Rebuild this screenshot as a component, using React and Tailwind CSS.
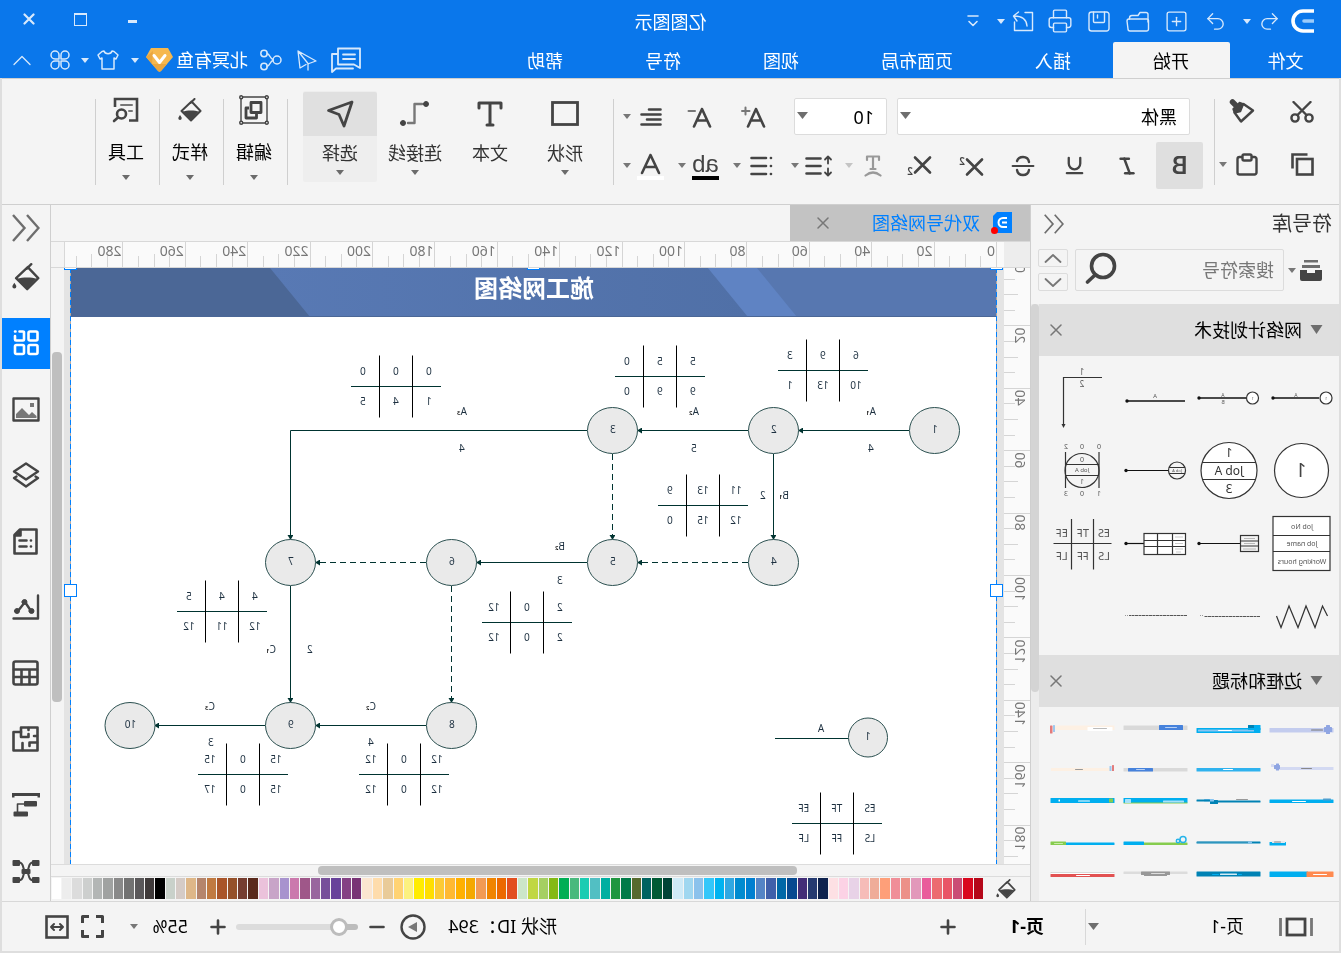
import React, { useState } from 'react';
import { Italic, Underline, Undo2, Redo2, SquarePlus, Printer } from 'lucide-react';

// Small stroked drawing, coordinates are pixels
function Icon({ w, h, sw = 2, fill = 'none', className = '', children }) {
  return (
    <svg
      width={w}
      height={h}
      viewBox={`0 0 ${w} ${h}`}
      fill={fill}
      stroke="currentColor"
      strokeWidth={sw}
      strokeLinecap="round"
      strokeLinejoin="round"
      className={`shrink-0 ${className}`}
      aria-hidden="true"
    >
      {children}
    </svg>
  );
}

function Caret({ className = '' }) {
  return (
    <svg width="8" height="5" viewBox="0 0 8 5" className={`shrink-0 ${className}`} aria-hidden="true">
      <path d="M0 0H8L4 5Z" fill="currentColor" />
    </svg>
  );
}

function BigCaret({ className = '' }) {
  return (
    <svg width="11" height="7" viewBox="0 0 11 7" className={`shrink-0 text-[#6e6e6e] ${className}`} aria-hidden="true">
      <path d="M0 0H11L5.500 7Z" fill="currentColor" />
    </svg>
  );
}

function IconButton({ label, className = '', children }) {
  return (
    <button type="button" aria-label={label} className={`flex shrink-0 items-center justify-center ${className}`}>
      {children}
    </button>
  );
}

function Bucket({ w = 24, h = 24 }) {
  return (
    <svg width={w} height={h} viewBox="0 0 24 24" fill="none" stroke="currentColor" strokeWidth="2" strokeLinejoin="round" strokeLinecap="round" className="shrink-0" aria-hidden="true">
      <path d="M7.500 1 11.500 5M10.500 3.500 20.500 13 11 22.500 1.500 13Z" />
      <path d="M3 13.500C7 12 15 12 19.500 13.500L11 22Z" fill="currentColor" stroke="none" />
      <path d="M22 17c1 1.500 1.700 2.500 1.700 3.200a1.700 1.700 0 0 1-3.400 0C20.300 19.500 21 18.500 22 17Z" fill="currentColor" stroke="none" />
    </svg>
  );
}

function CloseX() {
  return (
    <Icon w={12} h={12} sw={1.5}>
      <path d="M1 1 11 11M11 1 1 11" />
    </Icon>
  );
}

function DoubleChevron({ w, h }) {
  return (
    <svg width={w} height={h} viewBox="0 0 28 28" fill="none" stroke="#6e6e6e" strokeWidth="2.400" aria-hidden="true">
      <path d="M13 1 1.500 14 13 27M27 1 15.500 14 27 27" />
    </svg>
  );
}

/* ---------- title bar ---------- */

const MENU = ['插入', '页面布局', '视图', '符号', '帮助'];

function TitleBar() {
  return (
    <header className="shrink-0 bg-[#0a77eb] text-[#d8e9fc]">
      <div className="grid h-[42px] grid-cols-[1fr_auto_1fr] items-center">
        <div className="flex items-center pl-[18px]">
          <div className="flex w-10 justify-center text-white">
            <Icon w={23} h={24} sw={3.6}>
              <path d="M0 2H11A10 10 0 0 1 11 22H0" strokeLinecap="butt" />
              <path d="M0 12H10" stroke="#9ccbfa" />
            </Icon>
          </div>
          <IconButton label="撤销" className="w-[27px]"><Undo2 size={23} strokeWidth={1.4} /></IconButton>
          <IconButton label="撤销列表" className="w-[18px]"><Caret /></IconButton>
          <IconButton label="重做" className="ml-[3px] w-[39px]"><Redo2 size={23} strokeWidth={1.4} /></IconButton>
          <IconButton label="新建" className="w-[38px]"><SquarePlus size={25} strokeWidth={1.3} /></IconButton>
          <IconButton label="打开" className="w-[39px]">
            <Icon w={24} h={21} sw={1.4}>
              <path d="M2 11V3.500A2 2 0 0 1 4 1.500H10L12 4.500H18A2.500 2.500 0 0 1 20.500 7V8" />
              <path d="M3 8H21A2 2 0 0 1 23 10L22 18A2 2 0 0 1 20 20H3.500A2 2 0 0 1 1.500 18V9.500A1.500 1.500 0 0 1 3 8Z" />
            </Icon>
          </IconButton>
          <IconButton label="保存" className="w-[39px]">
            <Icon w={22} h={21} sw={1.4}>
              <rect x="1" y="1" width="20" height="19" rx="2.500" />
              <path d="M5.500 1V10.500A1 1 0 0 0 6.500 11.500H15.500A1 1 0 0 0 16.500 10.500V1M12.500 4V7" />
            </Icon>
          </IconButton>
          <IconButton label="打印" className="w-[39px]"><Printer size={26} strokeWidth={1.3} /></IconButton>
          <IconButton label="导出" className="w-[36px]">
            <Icon w={22} h={21} sw={1.4}>
              <path d="M9 1.500H1.500V19.500H19.500V11" />
              <path d="M7 15C7.500 8 12 5 20 5M15.500 1 20.500 5 17 10" />
            </Icon>
          </IconButton>
          <IconButton label="导出列表" className="w-2"><Caret /></IconButton>
          <IconButton label="更多" className="ml-[18px] w-3">
            <Icon w={12} h={12} sw={1.6}>
              <path d="M1 1H11M2 6.500 6 10.500 10 6.500" />
            </Icon>
          </IconButton>
        </div>
        <h1 className="pt-0.5 text-[18px] text-white">亿图图示</h1>
        <div className="flex items-center justify-end pr-[3px]">
          <IconButton label="最小化" className="w-[52px]"><span className="block h-[3px] w-[9px] bg-[#d8e9fc]" /></IconButton>
          <IconButton label="最大化" className="w-[52px]">
            <span className="mb-1 block h-[13px] w-[13px] border border-t-2 border-[#d8e9fc]" />
          </IconButton>
          <IconButton label="关闭" className="w-[52px]">
            <Icon w={12} h={12} sw={2.2} className="mb-1"><path d="M1.500 1.500 10.500 10.500M10.500 1.500 1.500 10.500" /></Icon>
          </IconButton>
        </div>
      </div>

      <div className="flex h-9 items-center">
        <nav className="flex h-full items-center text-[18px] text-white">
          <button type="button" className="h-full w-[111px] pt-0.5 whitespace-nowrap">文件</button>
          <button type="button" className="mr-px h-full w-[117px] rounded-t-xs bg-[#f4f4f4] pt-0.5 pl-px text-black">开始</button>
          {MENU.map((item) => (
            <button key={item} type="button" className="h-full px-[41px] pt-0.5 whitespace-nowrap">{item}</button>
          ))}
        </nav>
        <div className="ml-auto flex items-center pr-[13px]">
          <IconButton label="批注">
            <Icon w={30} h={26} sw={1.8}>
              <path d="M1 1.500H23V17.500H7L1 21Z" />
              <path d="M6 7.500H18M6 12H18M24 7H29V25L25 21.500H8" />
            </Icon>
          </IconButton>
          <IconButton label="发送" className="ml-[14px]">
            <Icon w={20} h={21} sw={1.3}>
              <path d="M19 1 1 11 8 13.500M19 1 17 18 11 14.500M19 1 9 13.500V20" />
            </Icon>
          </IconButton>
          <IconButton label="分享" className="ml-[15px]">
            <Icon w={22} h={22} sw={1.5}>
              <circle cx="18" cy="4.500" r="3.200" />
              <circle cx="18" cy="17.500" r="3.200" />
              <circle cx="5" cy="11" r="4" />
              <path d="M9 10.500C12 10 12 5 15 4.500M9 11.500C12 12 12 17 15 17.500" />
            </Icon>
          </IconButton>
          <a href="#account" className="ml-3 text-[18px] text-white">北冥有鱼</a>
          <svg width="27" height="24" viewBox="0 0 27 24" className="ml-[3px] shrink-0" aria-hidden="true">
            <path d="M5 0H22L27 9 15 23Q13.500 24.500 12 23L0 9Z" fill="#f6b84e" />
            <path d="M20 3 27 9 15 23Q13.500 24.500 12 23L6 16 21 16Z" fill="#e9a640" />
            <path d="M8 7.500 13.500 14.500 19 7.500" fill="none" stroke="#fff" strokeWidth="3" strokeLinecap="round" strokeLinejoin="round" />
          </svg>
          <Caret className="ml-[7px]" />
          <IconButton label="主题" className="ml-3">
            <Icon w={22} h={20} sw={1.5}>
              <path d="M7 1C8 4.500 14 4.500 15 1L17 1.500 21 5 19 9 17 8V19H5V8L3 9 1 5 5 1.500Z" />
            </Icon>
          </IconButton>
          <Caret className="ml-2" />
          <IconButton label="应用" className="ml-[11px]">
            <Icon w={20} h={20} sw={1.5}>
              <path d="M9 9H5A4 4 0 1 1 9 5ZM11 9V5A4 4 0 1 1 15 9ZM9 11V15A4 4 0 1 1 5 11ZM11 11H15A4 4 0 1 1 11 15Z" />
            </Icon>
          </IconButton>
          <IconButton label="收起功能区" className="ml-[19px]">
            <Icon w={18} h={11} sw={1.3}><path d="M1 9.500 9 1.500 17 9.500" /></Icon>
          </IconButton>
        </div>
      </div>
    </header>
  );
}

/* ---------- ribbon ---------- */

function Divider() {
  return <div className="mt-5 h-[86px] w-px shrink-0 bg-[#cfcfcf]" />;
}

function LetterA({ children }) {
  return (
    <Icon w={25} h={22} sw={2.6}>
      <path d="M2 20.500 10 3 18 20.500M5 14.500H15" />
      {children}
    </Icon>
  );
}

function BigButton({ label, caret = true, active, children }) {
  return (
    <button type="button" className={`mr-px h-[91px] w-[74px] shrink-0 rounded-xs ${active ? 'bg-[#eeeeee]' : ''}`}>
      <span className={`flex h-11 items-center justify-center rounded-t-xs ${active ? 'bg-[#e0e0e0]' : ''}`}>{children}</span>
      <span className="block h-7 text-[18px] leading-[34px] text-[#333]">{label}</span>
      <span className="flex h-[18px] items-center justify-center">{caret && <Caret className="text-[#6b6b6b]" />}</span>
    </button>
  );
}

function GroupButton({ label, children }) {
  return (
    <button type="button" className="mt-[13px] h-[91px] w-[63px] shrink-0 pl-[3px]">
      <span className="flex h-9 items-center justify-center">{children}</span>
      <span className="mt-2 block h-8 text-[18px] leading-8 text-black">{label}</span>
      <span className="flex h-[18px] items-center justify-center"><Caret className="text-[#6b6b6b]" /></span>
    </button>
  );
}

function Ribbon() {
  return (
    <div className="flex h-[127px] shrink-0 overflow-hidden border-y border-[#cfcfcf] bg-[#f4f4f4] text-[#444]">
      <div className="grid w-[124px] shrink-0 grid-cols-[60px_64px] grid-rows-[53px_53px] pt-[6px]">
        <IconButton label="剪切" className="pl-[14px]">
          <Icon w={24} h={22} sw={2.4}>
            <circle cx="5" cy="17" r="3.600" />
            <circle cx="19" cy="17" r="3.600" />
            <path d="M7.500 14 20.500 1M16.500 14 3.500 1" />
          </Icon>
        </IconButton>
        <IconButton label="格式刷" className="pl-[10px]">
          <Icon w={26} h={25} sw={2.4}>
            <path d="M22.500 3 19.500 6" strokeWidth="5.500" />
            <path d="M11.500 5 2 11.500 14 22.500 20.500 13.500Z" />
            <path d="M11.500 5 15.500 3.500 22 10 20.500 14 14.500 12.500Z" fill="currentColor" strokeWidth="1.500" />
          </Icon>
        </IconButton>
        <IconButton label="复制" className="pl-[13px]">
          <Icon w={23} h={23} sw={2.6}>
            <rect x="1.500" y="6" width="15.500" height="15.500" strokeLinejoin="miter" />
            <path d="M6.500 1.500H21.500V15.500" strokeLinecap="butt" strokeLinejoin="miter" />
          </Icon>
        </IconButton>
        <div className="flex items-center pl-[21px]">
          <IconButton label="粘贴">
            <Icon w={22} h={23} sw={2.4}>
              <rect x="1.500" y="4" width="19" height="17.500" rx="2" />
              <rect x="6.500" y="1.500" width="9" height="6" rx="1.500" fill="#f4f4f4" />
            </Icon>
          </IconButton>
          <Caret className="ml-[9px] text-[#777]" />
        </div>
      </div>
      <Divider />
      <div className="shrink-0 pt-[19px] pl-[11px]">
        <div className="flex h-[37px] items-center pl-[13px]">
          <div className="relative">
            <select aria-label="字体" defaultValue="黑体" className="h-[37px] w-[293px] appearance-none rounded-xs border border-[#dcdcdc] bg-white pt-0.5 pl-3 text-[18px] text-black">
              <option>黑体</option>
              <option>宋体</option>
            </select>
            <BigCaret className="pointer-events-none absolute top-[14px] right-[3px]" />
          </div>
          <div className="relative ml-[10px]">
            <select aria-label="字号" defaultValue="10" className="h-[37px] w-[93px] appearance-none rounded-xs border border-[#dcdcdc] bg-white pt-0.5 pl-3 text-[18px] text-black">
              <option>10</option>
              <option>12</option>
            </select>
            <BigCaret className="pointer-events-none absolute top-[14px] right-[3px]" />
          </div>
          <IconButton label="增大字号" className="ml-7"><LetterA><path d="M16.500 5H24M20.500 1.500V8.500" stroke="#777" strokeWidth="2" /></LetterA></IconButton>
          <IconButton label="减小字号" className="ml-[29px]"><LetterA><path d="M17 5H23.500" stroke="#777" strokeWidth="2" /></LetterA></IconButton>
          <IconButton label="对齐" className="ml-[25px]">
            <Icon w={22} h={18} sw={2.6}><path d="M1.500 1.500H13M1.500 6.500H20.500M1.500 11.500H15M1.500 16.500H20.500" /></Icon>
          </IconButton>
          <Caret className="ml-[9px] text-[#777]" />
        </div>
        <div className="mt-[7px] flex h-[47px] items-center">
          <button type="button" aria-label="加粗" className="mr-[3px] h-[47px] w-[47px] rounded-xs bg-[#dfdfdf] font-[Inter] text-[24px] leading-[47px] font-semibold">B</button>
          <IconButton label="倾斜" className="w-[52px]"><Italic size={22} strokeWidth={2.8} /></IconButton>
          <IconButton label="下划线" className="w-[52px]"><Underline size={23} strokeWidth={2.4} /></IconButton>
          <IconButton label="删除线" className="w-[52px]">
            <Icon w={24} h={22} sw={2.4}>
              <path d="M18 6C17 3 15 2 12 2S6.500 3.500 6 7M6 15C6.500 18 9 20 12 20S17.500 18.500 18 15" />
              <path d="M1.500 11H22.500" strokeWidth="1.800" />
            </Icon>
          </IconButton>
          <IconButton label="上标" className="w-[52px]">
            <Icon w={28} h={26} sw={2.6}>
              <path d="M3 6.500 18 21.500M18 6.500 3 21.500" />
              <text x="20" y="12" fontSize="10" fill="currentColor" stroke="none" fontWeight="600">2</text>
            </Icon>
          </IconButton>
          <IconButton label="下标" className="w-[52px]">
            <Icon w={28} h={26} sw={2.6}>
              <path d="M3 4.500 18 19.500M18 4.500 3 19.500" />
              <text x="20" y="22" fontSize="10" fill="currentColor" stroke="none" fontWeight="600">2</text>
            </Icon>
          </IconButton>
          <IconButton label="文字弧度" className="w-10 text-[#999]">
            <Icon w={18} h={22} sw={2.2}>
              <path d="M3 5V1.500H15V5M9 1.500V14M6.500 14H11.500M1.500 20.500Q9 14.500 16.500 20.500" />
            </Icon>
          </IconButton>
          <Caret className="text-[#c4c4c4]" />
          <IconButton label="行距" className="ml-3">
            <Icon w={28} h={22} sw={2.6}>
              <path d="M12.500 3.500H26.500M12.500 11H26.500M12.500 18.500H26.500" />
              <path d="M5 8.500V2M2 4.500 5 1.500 8 4.500M5 13.500V20M2 17.500 5 20.500 8 17.500" strokeWidth="1.800" />
            </Icon>
          </IconButton>
          <Caret className="ml-[6px] text-[#777]" />
          <IconButton label="项目符号" className="ml-[18px]">
            <Icon w={23} h={20} sw={2.6}>
              <path d="M7 2H21.500M7 10H21.500M7 18H21.500M2 2H2.100M2 10H2.100M2 18H2.100" />
            </Icon>
          </IconButton>
          <Caret className="ml-[9px] text-[#777]" />
          <button type="button" aria-label="突出显示" className="ml-[14px] h-7 w-[27px] border-b-4 border-black font-['Liberation_Sans'] text-[24px] leading-6">ab</button>
          <Caret className="ml-[6px] text-[#777]" />
          <IconButton label="字体颜色" className="ml-[14px]">
            <Icon w={27} h={28} sw={2.6}>
              <path d="M5 21 13.500 3 22 21M8.500 15H18.500" />
              <path d="M0 26H27" stroke="#fff" strokeWidth="4" strokeLinecap="butt" />
            </Icon>
          </IconButton>
          <Caret className="ml-[6px] text-[#777]" />
        </div>
      </div>
      <div className="w-[9px] shrink-0" />
      <Divider />
      <div className="flex shrink-0 pt-3 pl-[11px]">
        <BigButton label="形状">
          <Icon w={28} h={25} sw={2.8}><rect x="1.500" y="1.500" width="25" height="22" strokeLinejoin="miter" /></Icon>
        </BigButton>
        <BigButton label="文本" caret={false}>
          <Icon w={26} h={26} sw={3}><path d="M2 7V2H24V7M13 2V24M10 24H16" /></Icon>
        </BigButton>
        <BigButton label="连接线">
          <Icon w={31} h={27} sw={2.4}>
            <path d="M8 4H15.500V23H22" stroke="#777" />
            <circle cx="4" cy="4" r="2.500" fill="currentColor" strokeWidth="1" />
            <circle cx="27" cy="23" r="2.500" fill="currentColor" strokeWidth="1" />
          </Icon>
        </BigButton>
        <BigButton label="选择" active>
          <Icon w={28} h={28} sw={2.8}><path d="M2 2 25.500 10.500 15 14.500 10 26Z" /></Icon>
        </BigButton>
      </div>
      <div className="w-[14px] shrink-0" />
      <Divider />
      <GroupButton label="编辑">
        <Icon w={30} h={30} sw={1.4}>
          <path d="M4 2H26M4 28H26M2 4V26M28 4V26" />
          <circle cx="2.200" cy="2.200" r="1.500" />
          <circle cx="27.800" cy="2.200" r="1.500" />
          <circle cx="2.200" cy="27.800" r="1.500" />
          <circle cx="27.800" cy="27.800" r="1.500" />
          <rect x="8" y="7.500" width="10" height="10" strokeWidth="2.800" />
          <path d="M12.500 19V23H23V13H20" strokeWidth="2.800" strokeLinecap="butt" />
        </Icon>
      </GroupButton>
      <Divider />
      <GroupButton label="样式"><Bucket /></GroupButton>
      <Divider />
      <GroupButton label="工具">
        <Icon w={27} h={26} sw={2.6}>
          <path d="M24 10V2H2V23.500H10" strokeLinecap="butt" strokeLinejoin="miter" />
          <path d="M7 8H18M7 14H10" stroke="#777" strokeWidth="2" />
          <circle cx="17.500" cy="17" r="4.500" />
          <path d="M21 20.500 25 24" />
        </Icon>
      </GroupButton>
      <Divider />
    </div>
  );
}

/* ---------- symbol library ---------- */

function Tile({ children }) {
  return (
    <svg width="73" height="73" viewBox="0 0 73 73" fill="none" stroke="#333" strokeWidth="1.200" aria-hidden="true">
      {children}
    </svg>
  );
}

function T({ x, y, s = 8, c = '#555', children }) {
  return (
    <text x={x} y={y} fontSize={s} fill={c} stroke="none" textAnchor="middle" dominantBaseline="central">
      {children}
    </text>
  );
}

function Tip({ x, y }) {
  return <circle cx={x} cy={y} r="1.700" fill="#111" stroke="none" />;
}

function SymbolGrid() {
  return (
    <div className="grid grid-cols-[repeat(4,73px)] pt-[5px] pb-[2px]">
      <Tile>
        <path d="M20 37H66" stroke="#111" strokeWidth="1.500" /><Tip x={66} y={37} />
        <circle cx="13" cy="37" r="6" fill="#fff" />
        <T x={13} y={37} s={4}>1</T><T x={43} y={34} s={5}>A</T>
      </Tile>
      <Tile>
        <path d="M20 37H67" stroke="#111" strokeWidth="1.500" /><Tip x={67} y={37} />
        <circle cx="13.500" cy="37" r="6" fill="#fff" />
        <T x={13.5} y={37} s={4}>1</T><T x={43} y={34} s={5}>A</T><T x={43} y={41} s={5}>B</T>
      </Tile>
      <Tile>
        <path d="M8 40H66" stroke="#111" strokeWidth="1.300" /><Tip x={66} y={40} />
        <T x={38} y={35} s={6}>A</T>
      </Tile>
      <Tile>
        <path d="M18 16.500H56.500V64" /><path d="M54.500 63H58.500L56.500 67Z" fill="#333" stroke="none" />
        <T x={38} y={10} s={8}>1</T><T x={38} y={22} s={8}>2</T>
      </Tile>

      <Tile>
        <circle cx="37.500" cy="36.500" r="27" fill="#fff" /><T x={38} y={36} s={19} c="#444">1</T>
      </Tile>
      <Tile>
        <circle cx="37" cy="36.500" r="28" fill="#fff" /><path d="M10 28.500H64M10 45.500H64" />
        <T x={37} y={18} s={12} c="#333">1</T><T x={37} y={36} s={12} c="#333">Job A</T><T x={37} y={54} s={12} c="#333">3</T>
      </Tile>
      <Tile>
        <path d="M25 36.500H67" stroke="#111" /><Tip x={67} y={36.5} />
        <circle cx="16" cy="36.500" r="8.500" /><path d="M8 33.500H24M8 39.500H24" />
        <T x={16} y={36.5} s={4}>Job A</T>
      </Tile>
      <Tile>
        <circle cx="38" cy="36.500" r="17" /><path d="M21 18V54M54.500 18V54M21 30.500H54.500M21 41.500H54.500" />
        <T x={21} y={12} s={7}>0</T><T x={38} y={12} s={7}>0</T><T x={54} y={12} s={7}>2</T>
        <T x={38} y={25} s={7}>0</T><T x={38} y={36} s={6}>Job A</T><T x={38} y={47} s={7}>1</T>
        <T x={21} y={59} s={7}>1</T><T x={38} y={59} s={7}>0</T><T x={54} y={59} s={7}>3</T>
      </Tile>

      <Tile>
        <rect x="9" y="9.500" width="57" height="54" fill="#fff" /><path d="M9 28.500H66M9 44.500H66" />
        <T x={37} y={19} s={7}>Job No</T><T x={37} y={36} s={7}>Job name</T><T x={37} y={54} s={7}>Working hours</T>
      </Tile>
      <Tile>
        <path d="M26 36.500H67" stroke="#111" /><Tip x={67} y={36.5} />
        <rect x="7.500" y="28.500" width="18" height="16" /><path d="M7.500 34H25.500M7.500 39H25.500" />
        <path d="M11 31.500H22M11 36.500H22M10 42H23" stroke="#aaa" strokeWidth="0.800" />
      </Tile>
      <Tile>
        <path d="M49 36.500H67" stroke="#111" /><Tip x={67} y={36.5} />
        <rect x="7.500" y="26.500" width="41.500" height="21" fill="#fff" /><path d="M7.500 33.500H49M7.500 39.500H49M20.500 26.500V47.500M35.500 26.500V47.500" />
        <path d="M10 30H18M10 36.500H18M10 42H18M12 45H17" stroke="#bbb" strokeWidth="0.800" />
      </Tile>
      <Tile>
        <path d="M8.500 36.500H66.500M26.500 12V62.500M48.500 12V62.500" />
        <T x={16} y={25} s={11}>ES</T><T x={37} y={25} s={11}>TF</T><T x={58} y={25} s={11}>EF</T>
        <T x={16} y={48} s={11}>LS</T><T x={37} y={48} s={11}>FF</T><T x={58} y={48} s={11}>LF</T>
      </Tile>

      <Tile>
        <path d="M11.500 36 16.500 26 24 47.500 33 26 41 47.500 50 26 58 47.500 62.500 36" />
      </Tile>
      <Tile><path d="M6 36.500H62" strokeDasharray="3 0.500" stroke="#555" /><path d="M63 35.500H67" stroke="#999" strokeDasharray="1 1" /></Tile>
      <Tile><path d="M6 35.500H64" strokeDasharray="3 0.500" stroke="#555" /><path d="M65 35.500H68" stroke="#999" strokeDasharray="1 1" /></Tile>
    </div>
  );
}

// [x, y, width, height, color] inside a 73x37 tile
const BANNERS = [
  [[5.5, 18, 64, 4.5, '#c3ccee'], [16, 19.5, 12, 1, '#777'], [7, 17, 8, 5, '#8fa5e2'], [9, 15, 4, 9, '#8fa5e2']],
  [[5.5, 18, 64, 5, '#00aeef'], [12, 19.5, 56, 2, '#86c5f2'], [5.5, 15, 12.5, 5, '#00aeef'], [34, 20, 14, 1, '#fff'], [12, 15, 6, 3, '#0082b4']],
  [[5.5, 15.5, 64, 4.5, '#d9d9d9'], [10, 15, 24, 5, '#4682dc'], [16, 17, 12, 1, '#b7d0f5']],
  [[5.5, 15.5, 62, 4.5, '#fdf0e3'], [7.5, 17, 25, 4, '#fff'], [13, 18, 14, 1, '#bbb'], [65, 15, 2, 7, '#9cc8f0'], [67.5, 15.5, 2.5, 8, '#e37b7b']],
  [[5.5, 20, 58, 3, '#d3d9f2'], [27, 21, 11, 1, '#888'], [59, 18, 6, 4, '#8fa5e2'], [60, 16.5, 3, 7, '#8fa5e2'], [65, 17, 3, 3, '#d3d9f2']],
  [[5.5, 21, 64, 3.5, '#2fb2ee'], [33, 22, 10, 1, '#fff']],
  [[5.5, 21, 64, 3.5, '#d9d9d9'], [40, 21, 25, 3.5, '#4682dc'], [48, 22, 9, 1, '#b7d0f5']],
  [[8, 21, 61, 3, '#fdf0e3'], [37, 22, 8, 1, '#999'], [6, 18, 2, 6, '#e37b7b'], [8.5, 19, 2, 5, '#9cc8f0']],
  [[5.5, 15.5, 64, 3.5, '#00aeef'], [33, 17, 14, 1, '#fff'], [8, 14.5, 8, 2, '#4f9fd0']],
  [[5.5, 16.5, 46, 2, '#0082b4'], [48, 16, 8, 4, '#0082b4'], [52, 15, 10, 2.5, '#86c5f2'], [56, 15.5, 13.5, 2, '#0082b4'], [18, 15, 12, 1, '#999']],
  [[5.5, 14, 64, 5, '#00aeef'], [5.5, 18.5, 64, 1, '#86cc4e'], [9, 16.5, 21, 2, '#a8e0f8'], [62, 15, 6, 4, '#a8e0f8']],
  [[5.5, 14, 64, 5, '#00aeef'], [7, 14.5, 4, 4, '#86cc4e'], [30, 16.5, 12, 1, '#fff'], [60, 15.5, 1.5, 2, '#fff']],
  [[53, 21, 16.5, 3.5, '#00aeef'], [54, 20, 13, 2, '#e4e9ec'], [58, 20.5, 7, 1, '#888']],
  [[5.5, 20.5, 64, 2, '#0082b4'], [14, 20.5, 4, 2, '#86c5f2'], [18, 20.5, 51, 1, '#5aa7c8']],
  [[5.5, 21.5, 45, 2.5, '#86cc4e'], [49, 20.5, 20.5, 3.5, '#00aeef']],
  [[5.5, 21.5, 50, 2.5, '#00aeef'], [54, 20.5, 15.5, 3.5, '#86cc4e'], [57, 22, 9, 1, '#c8eca8']],
  [[31, 13.5, 38.5, 5.5, '#00aeef'], [5.5, 13.5, 27, 5.5, '#ff8a50'], [12, 16, 14, 1, '#fff']],
  [[5.5, 13.5, 64, 5, '#0082b4'], [29, 15.5, 17, 1.5, '#d4eef8'], [24, 16, 4, 1, '#00aeef'], [47, 16, 7, 1, '#00aeef']],
  [[5.5, 13.5, 64, 2.5, '#dcdcdc'], [23, 13.5, 29, 3.5, '#989898'], [28, 15, 14, 1, '#ddd'], [26, 16.5, 23, 1.5, '#989898']],
  [[5.5, 16, 64, 3, '#e25151'], [5.5, 14, 64, 1, '#ccc'], [6, 14.8, 63, 1.2, '#fff'], [30, 17, 14, 1, '#fff']],
];

function BannerGrid() {
  return (
    <div className="grid grid-cols-[repeat(4,73px)] pt-[3px]">
      {BANNERS.map((parts, i) => (
        <svg key={i} width="73" height="37" viewBox="0 0 73 37" aria-hidden="true">
          {parts.map(([x, y, w, h, c], j) => (
            <rect key={j} x={x} y={y} width={w} height={h} rx="0.500" fill={c} />
          ))}
          {i === 14 && (
            <g fill="none" stroke="#25b4ea" strokeWidth="1.500">
              <circle cx="10" cy="18.500" r="3" />
              <circle cx="15" cy="20" r="1.700" />
            </g>
          )}
        </svg>
      ))}
    </div>
  );
}

function SectionHeader({ title }) {
  return (
    <div className="flex h-[52px] shrink-0 items-center bg-[#dfdfdf] pr-[11px] pl-4">
      <svg width="13" height="10" viewBox="0 0 13 10" aria-hidden="true"><path d="M0.500 0H12.500L6.500 9Z" fill="#6e6e6e" /></svg>
      <h2 className="ml-2 text-[18px] text-black">{title}</h2>
      <IconButton label="关闭" className="ml-auto text-[#777]"><CloseX /></IconButton>
    </div>
  );
}

function SymbolPanel() {
  return (
    <aside className="flex w-[309px] shrink-0 flex-col border-r border-[#cfcfcf] bg-[#f4f4f4]">
      <div className="flex h-9 shrink-0 items-center justify-between pt-0.5 pr-[13px] pl-[7px]">
        <h2 className="text-[20px] text-[#333]">符号库</h2>
        <IconButton label="收起"><DoubleChevron w={20} h={20} /></IconButton>
      </div>
      <div className="flex h-[63px] shrink-0 items-start pt-2 pl-[17px]">
        <IconButton label="符号库列表" className="h-[42px]">
          <svg width="22" height="22" viewBox="0 0 22 22" aria-hidden="true">
            <path d="M4 1H18V3.500H4ZM2 6H20V9H2Z" fill="#6e6e6e" />
            <path d="M0 11H7V14H15V11H22V20Q22 22 20 22H2Q0 22 0 20Z" fill="#444" />
          </svg>
          <Caret className="ml-1 text-[#777]" />
        </IconButton>
        <div className="ml-1 flex h-[42px] w-[209px] items-center rounded-xs border border-[#dcdcdc] pr-[9px] pl-[9px]">
          <input aria-label="搜索符号" placeholder="搜索符号" className="w-0 flex-1 bg-transparent text-[18px] placeholder:text-[#777] focus:outline-none" />
          <IconButton label="搜索" className="-mt-1 text-[#444]">
            <Icon w={32} h={33} sw={3.6}><circle cx="14" cy="14" r="11.500" /><path d="M22 23 29.500 30" /></Icon>
          </IconButton>
        </div>
        <div className="ml-[7px] flex flex-col gap-[6px] text-[#777]">
          <IconButton label="上一个" className="h-[18px] w-[30px] rounded-xs border border-[#dcdcdc]">
            <Icon w={18} h={9} sw={1.8}><path d="M1.500 8 9 1 16.500 8" /></Icon>
          </IconButton>
          <IconButton label="下一个" className="h-[18px] w-[30px] rounded-xs border border-[#dcdcdc]">
            <Icon w={18} h={9} sw={1.8}><path d="M1.500 1 9 8 16.500 1" /></Icon>
          </IconButton>
        </div>
      </div>
      <div className="flex min-h-0 flex-1">
        <div className="min-w-0 flex-1 overflow-hidden">
          <SectionHeader title="网络计划技术" />
          <SymbolGrid />
          <SectionHeader title="边框和标题" />
          <BannerGrid />
        </div>
        <div className="w-2 bg-[#ececec]"><div className="h-[65%] rounded bg-[#d4d4d4]" /></div>
      </div>
    </aside>
  );
}

/* ---------- drawing area ---------- */

const STEP = 62.4;

function TopRuler() {
  const ticks = Array.from({ length: 61 }, (_, i) => i);
  return (
    <svg width="940" height="26" className="block shrink-0" aria-hidden="true">
      {ticks.map((i) => {
        const x = Math.round(7 + (i * STEP) / 4) + 0.5;
        const top = i % 4 === 0 ? 0 : i % 4 === 2 ? 12 : 14;
        return <path key={i} d={`M${x} ${top}V26`} stroke="#d5d5d5" />;
      })}
      {ticks.filter((i) => i % 4 === 0 && i < 60).map((i) => (
        <text key={i} x={9 + (i * STEP) / 4} y="14" fontSize="14" fill="#777">{i * 5}</text>
      ))}
    </svg>
  );
}

function SideRuler() {
  const ticks = Array.from({ length: 40 }, (_, i) => i);
  return (
    <svg width="26" height="597" className="block" aria-hidden="true">
      {ticks.map((i) => {
        const y = Math.round(-5 + (i * STEP) / 4) + 0.5;
        const left = i % 4 === 0 ? 0 : i % 4 === 2 ? 12 : 15;
        return <path key={i} d={`M${left} ${y}H26`} stroke="#d5d5d5" />;
      })}
      {ticks.filter((i) => i % 4 === 0).map((i) => (
        <text key={i} transform={`translate(15 ${-3 + (i * STEP) / 4}) rotate(-90)`} fontSize="14" fill="#777" textAnchor="end">{i * 5}</text>
      ))}
    </svg>
  );
}

const NODES = [
  [1, 406.5, 430.5], [2, 567.5, 430.5], [3, 728.5, 430.5], [4, 567.5, 562.5], [5, 728.5, 562.5],
  [6, 889.5, 562.5], [7, 1050.5, 562.5], [8, 889.5, 725.5], [9, 1050.5, 725.5], [10, 1211, 725.5],
];

// path, dashed
const EDGES = [
  ['M432 430.500H542'], ['M593 430.500H703'], ['M754 430.500H1050.500V539'], ['M567.500 454V539'],
  ['M728.500 454V539', true], ['M593 562.500H703', true], ['M754 562.500H864'], ['M915 562.500H1025', true],
  ['M889.500 586V702', true], ['M1050.500 586V702'], ['M915 725.500H1025'], ['M1076 725.500H1186'],
];

const TABLES = [
  [518, 370.5, ['6', '9', '3', '10', '13', '1']],
  [681, 376.5, ['5', '5', '0', '9', '9', '0']],
  [945, 386.5, ['0', '0', '0', '1', '4', '5']],
  [638, 505.5, ['11', '13', '9', '12', '15', '0']],
  [814, 622.5, ['2', '0', '12', '2', '0', '12']],
  [1119, 611.5, ['4', '4', '5', '12', '11', '12']],
  [937, 774.5, ['12', '0', '12', '12', '0', '12']],
  [1098, 774.5, ['15', '0', '15', '15', '0', '17']],
  [504, 823.5, ['ES', 'TF', 'EF', 'LS', 'FF', 'LF']],
];

// text, subscript, x, y
const LABELS = [
  ['A', '1', 470, 411], ['4', '', 470, 448], ['A', '2', 647, 411], ['5', '', 647, 448],
  ['A', '3', 879, 411], ['4', '', 879, 448], ['B', '1', 557, 495], ['2', '', 578, 495],
  ['B', '2', 781, 546], ['3', '', 781, 580], ['2', '', 1031, 649], ['C', '1', 1070, 649],
  ['C', '2', 970, 706], ['4', '', 970, 742], ['C', '3', 1131, 706], ['3', '', 1130, 742], ['A', '', 520, 728],
];

function Diagram() {
  return (
    <svg width="940" height="597" viewBox="337 268 940 597" className="block" fontSize="10" fill="#1d3040">
      <defs>
        <linearGradient id="band" x1="0" x2="1">
          <stop offset="0" stopColor="#5070a7" />
          <stop offset="1" stopColor="#5879b4" />
        </linearGradient>
        <marker id="arrow" markerWidth="6" markerHeight="6" refX="4" refY="3" orient="auto" markerUnits="userSpaceOnUse">
          <path d="M0 0 5 3 0 6Z" fill="#003330" />
        </marker>
      </defs>
      <rect x="344" y="268" width="927" height="597" fill="#fff" />
      <rect x="344" y="268" width="927" height="49" fill="#5777b0" />
      <path d="M633 268H1071L1031 317H593Z" fill="url(#band)" />
      <path d="M584 268H633L593 317H544Z" fill="#5f83c3" />
      <path d="M1071 268H1271V317H1031Z" fill="#4b6796" />
      <path d="M344 316.500H1271" stroke="#4b6796" />
      <text x="807" y="287" fontSize="24" fontWeight="700" fill="#fff" textAnchor="middle" dominantBaseline="central">施工网络图</text>

      {EDGES.map(([d, dashed]) => (
        <path key={d} d={d} fill="none" stroke="#003330" strokeDasharray={dashed ? '6 4' : undefined} markerEnd="url(#arrow)" />
      ))}
      {NODES.map(([n, x, y]) => (
        <g key={n}>
          <ellipse cx={x} cy={y} rx="25" ry="23" fill="#eaeaea" stroke="#2b5050" />
          <text x={x - 0.5} y={y - 2} textAnchor="middle" dominantBaseline="central">{n}</text>
        </g>
      ))}
      <path d="M493 738.500H566" stroke="#003330" />
      <circle cx="473" cy="737.500" r="19.500" fill="#eaeaea" stroke="#2b5050" />
      <text x="473" y="736" textAnchor="middle" dominantBaseline="central">1</text>

      {TABLES.map(([x, y, cells]) => (
        <g key={`${x}-${y}`}>
          <path d={`M${x - 45} ${y}H${x + 45}`} stroke="#003330" />
          <path d={`M${x - 16.5} ${y - 31}V${y + 31}M${x + 16.5} ${y - 31}V${y + 31}`} stroke="#000" />
          {cells.map((c, i) => (
            <text key={i} x={x - 33 + (i % 3) * 33} y={y + (i < 3 ? -16 : 14)} textAnchor="middle" dominantBaseline="central">{c}</text>
          ))}
        </g>
      ))}
      {LABELS.map(([t, sub, x, y]) => (
        <text key={`${x}-${y}`} x={x} y={y} textAnchor="middle" dominantBaseline="central">
          {t}
          {sub && <tspan fontSize="6" dy="2" fill="#000" fontWeight="600">{sub}</tspan>}
        </text>
      ))}

      <path d="M344.500 268V865M1270.500 268V865" stroke="#b0a8a4" />
      <path d="M344.500 268V865M1270.500 268V865" stroke="#0080ff" strokeDasharray="5 3" />
      <g fill="#fff" stroke="#0080ff">
        <rect x="338.500" y="257.500" width="12" height="12" />
        <rect x="801.500" y="257.500" width="12" height="12" />
        <rect x="1264.500" y="257.500" width="12" height="12" />
        <rect x="338.500" y="584.500" width="12" height="12" />
        <rect x="1264.500" y="584.500" width="12" height="12" />
      </g>
    </svg>
  );
}

const SWATCHES = [
  '#b50719', '#d9071e', '#ca4c75', '#e95566', '#ec6b70', '#e95c9b', '#e298ba', '#ec9088', '#f08e98', '#fe9f79',
  '#efac99', '#f6bcb8', '#e8d2e7', '#fcd2e5', '#fde0e4', '#0e224e', '#253a70', '#432d77', '#064990', '#0068a7',
  '#4060aa', '#5484c5', '#007fd0', '#008bd0', '#30a8e2', '#00b3f0', '#33c7fa', '#8bc2ec', '#a0d7f0', '#cfeaf7',
  '#004336', '#005a34', '#006360', '#576a2e', '#007a48', '#209640', '#00afa1', '#52bfc3', '#1bccb2', '#49b97d',
  '#00ae54', '#84b914', '#a5cf62', '#c0d742', '#cce6c9', '#e24f1f', '#ec6900', '#f08400', '#f29a54', '#f4a800',
  '#ffb000', '#ffb933', '#fcca35', '#ffde00', '#ffec00', '#fcf180', '#ffd373', '#e9cb99', '#fedcac', '#fbe6d0',
  '#783375', '#844184', '#68429a', '#77509a', '#99669e', '#9f5789', '#cb79ad', '#a893ce', '#c8a4c8', '#ebc2db',
  '#5a2a1c', '#753d30', '#95512a', '#a95529', '#c07a41', '#b5856c', '#deb788', '#d5cbc6', '#c9d1ca', '#000000',
  '#3f3a3a', '#5a585a', '#727272', '#898989', '#a0a2a1', '#b3b6b5', '#cdcfce', '#dcdcdc', '#ededed', '#ffffff',
];

function Workspace() {
  return (
    <main className="flex min-w-0 flex-1 flex-col bg-[#f4f4f4]">
      <div className="flex h-9 shrink-0">
        <div className="flex w-[240px] items-center bg-[#c3c3c3] pr-[27px] pl-[18px]">
          <svg width="21" height="22" viewBox="0 0 21 22" className="shrink-0" aria-hidden="true">
            <path d="M0 0H15L19 4V21H0Z" fill="#0080ff" />
            <path d="M5 6H9A4.500 4.500 0 0 1 9 15H5M5 10.500H10" fill="none" stroke="#fff" strokeWidth="2" />
            <circle cx="17.500" cy="18.500" r="3.500" fill="#f00" />
          </svg>
          <span className="ml-[11px] text-[18px] text-[#0080ff]">双代号网络图</span>
          <IconButton label="关闭文档" className="ml-auto text-[#777]"><CloseX /></IconButton>
        </div>
      </div>
      <div className="flex h-[27px] shrink-0 border-y border-[#d8d8d8]">
        <div className="w-[26px] shrink-0 bg-[#ededed]" />
        <div className="min-w-0 flex-1 overflow-hidden border-r border-[#d8d8d8] bg-[#fafafa]"><TopRuler /></div>
        <div className="w-[13px] shrink-0" />
      </div>
      <div className="flex min-h-0 flex-1">
        <div className="w-[27px] shrink-0 overflow-hidden border-r border-[#dcdcdc] bg-[#fafafa]"><SideRuler /></div>
        <div className="-ml-px min-w-0 flex-1 overflow-hidden bg-[#e4e4e4]"><Diagram /></div>
        <div className="flex w-[13px] shrink-0 flex-col pt-[84px] pl-[2px]">
          <div className="h-[350px] w-[10px] rounded bg-[#bfbfbf]" />
        </div>
      </div>
      <div className="flex h-[13px] shrink-0 items-center border-y border-[#dcdcdc] pl-[233px]">
        <div className="h-[9px] w-[479px] rounded bg-[#bfbfbf]" />
      </div>
      <div className="flex h-6 shrink-0 items-start pt-px">
        <IconButton label="填充颜色" className="h-[21px] w-[47px] text-[#444]"><Bucket w={20} h={20} /></IconButton>
        <div className="flex h-[21px] flex-1 gap-px">
          {SWATCHES.map((c) => (
            <button key={c} type="button" aria-label={c} className="flex-1" style={{ backgroundColor: c }} />
          ))}
        </div>
      </div>
    </main>
  );
}

/* ---------- side rail ---------- */

const RAIL = [
  ['填充', <Bucket w={28} h={28} />],
  ['符号', (
    <Icon w={26} h={26} sw={2.6}>
      <rect x="1.500" y="1.500" width="9" height="9" rx="1.500" />
      <rect x="1.500" y="15" width="9" height="9" rx="1.500" />
      <rect x="15" y="15" width="9" height="9" rx="1.500" />
      <path d="M19.500 1.500H16A1 1 0 0 0 15 2.500V9.500A1 1 0 0 0 16 10.500H23A1 1 0 0 0 24 9.500V6M23.500 1.500H24" />
    </Icon>
  )],
  ['图片', (
    <Icon w={28} h={25} sw={2.4}>
      <rect x="1.500" y="1.500" width="25" height="22" />
      <path d="M3.500 21V19L8 15 11 18 18 11 24 17V21Z" fill="#777" stroke="none" />
      <rect x="6" y="6" width="4" height="4" fill="#777" stroke="none" />
    </Icon>
  )],
  ['图层', (
    <Icon w={28} h={26} sw={2.4}>
      <path d="M14 1.500 26 9.500 14 17.500 2 9.500Z" />
      <path d="M2 16 14 24.500 26 16M2 16 4.500 14.500M26 16 23.500 14.500" />
    </Icon>
  )],
  ['备注', (
    <Icon w={25} h={27} sw={2.6}>
      <path d="M1.500 1.500H18L23.500 7V25.500H1.500Z" />
      <path d="M17.500 2V7.500H23" fill="currentColor" />
      <path d="M7 12.500H7.100M11.500 12.500H18.500M7 18.500H7.100M11.500 18.500H18.500" />
    </Icon>
  )],
  ['图表', (
    <Icon w={28} h={26} sw={2.4}>
      <path d="M2 1.500V24.500H26.500M9 17 15 8 22 17" />
      <circle cx="8.500" cy="17" r="2.500" fill="currentColor" strokeWidth="1" />
      <circle cx="15.500" cy="8" r="2.500" fill="currentColor" strokeWidth="1" />
      <circle cx="23" cy="17" r="2.500" fill="currentColor" strokeWidth="1" />
    </Icon>
  )],
  ['表格', (
    <Icon w={27} h={26} sw={2.6}>
      <rect x="1.500" y="1.500" width="24" height="23" rx="2" />
      <path d="M2 9.500H25M2 17H25M9.500 10V24M17.500 10V24" />
    </Icon>
  )],
  ['平面图', (
    <Icon w={27} h={26} sw={2.6}>
      <path d="M25.500 6H18V1.500H1.500V24.500H25.500Z" />
      <path d="M18 6V11H10.500V8M10.500 2V4M2 10H5M2 16.500H9.500V20M16.500 17V24" />
    </Icon>
  )],
  ['组织', (
    <Icon w={28} h={26} sw={2}>
      <path d="M1 5.500V2.500H27V5.500" strokeWidth="3" strokeLinecap="butt" strokeLinejoin="miter" />
      <path d="M15 12H22.500V20" strokeWidth="1.600" />
      <rect x="4" y="10" width="11" height="3.500" fill="currentColor" />
      <rect x="13" y="20.500" width="12.500" height="3" fill="currentColor" />
    </Icon>
  )],
  ['导图', (
    <Icon w={28} h={25} sw={2}>
      <path d="M7 3.500C13 3.500 10 12.500 14 12.500S15 3.500 21 3.500M7 21.500C13 21.500 10 12.500 14 12.500S15 21.500 21 21.500" />
      <g fill="currentColor">
        <rect x="1.500" y="2" width="5.500" height="4" />
        <rect x="21" y="2" width="5.500" height="4" />
        <rect x="1.500" y="19" width="5.500" height="4" />
        <rect x="21" y="19" width="5.500" height="4" />
        <rect x="10.500" y="11" width="7" height="3" />
      </g>
    </Icon>
  )],
];

function Rail() {
  const [active, setActive] = useState('符号');
  return (
    <aside className="flex w-[49px] shrink-0 flex-col border-l border-[#cfcfcf] bg-[#f4f4f4] text-[#444]">
      <IconButton label="展开" className="h-[39px] pt-[6px]"><DoubleChevron w={28} h={28} /></IconButton>
      {RAIL.map(([label, icon]) => (
        <div key={label} className="flex h-[66px] shrink-0 items-center">
          <button
            type="button"
            aria-label={label}
            onClick={() => setActive(label)}
            className={`flex h-[51px] w-full items-center justify-center ${active === label ? 'bg-[#0080ff] text-white' : ''}`}
          >
            {icon}
          </button>
        </div>
      ))}
    </aside>
  );
}

/* ---------- status bar ---------- */

function Plus() {
  return <Icon w={16} h={16} sw={2.6}><path d="M1.500 8H14.500M8 1.500V14.500" /></Icon>;
}

function StatusBar() {
  const [zoom, setZoom] = useState(10);
  return (
    <footer className="flex h-[50px] shrink-0 items-center border-t border-[#d8d8d8] bg-[#f4f4f4] text-[18px] text-black">
      <IconButton label="视图" className="ml-[26px] text-[#444]">
        <Icon w={34} h={20} sw={2.8}>
          <rect x="8" y="2" width="18" height="16" strokeLinejoin="miter" />
          <path d="M1.500 1V19M32.500 1V19" stroke="#777" strokeWidth="2.800" strokeLinecap="butt" />
        </Icon>
      </IconButton>
      <span className="ml-[35px] w-[145px] shrink-0">页-1</span>
      <BigCaret />
      <div className="ml-0.5 h-9 w-px shrink-0 bg-[#d8d8d8]" />
      <button type="button" className="ml-[41px] w-[88px] shrink-0 text-left font-bold">页-1</button>
      <IconButton label="添加页" className="text-[#444]"><Plus /></IconButton>
      <div className="ml-auto flex items-center pr-[43px]">
        <span className="w-[131px] whitespace-nowrap">形状 ID：394</span>
        <IconButton label="播放" className="text-[#444]">
          <Icon w={26} h={26} sw={2.4}>
            <circle cx="13" cy="13" r="11.500" />
            <path d="M9 8V18L18 13Z" fill="#777" stroke="none" />
          </Icon>
        </IconButton>
        <IconButton label="缩小" className="ml-[15px] text-[#444]">
          <Icon w={16} h={16} sw={2.6}><path d="M1.500 8H14.500" /></Icon>
        </IconButton>
        <input
          type="range"
          aria-label="缩放"
          value={zoom}
          onChange={(e) => setZoom(Number(e.target.value))}
          className="mr-[10px] ml-[11px] h-[6px] w-[122px] appearance-none rounded-full bg-[linear-gradient(to_right,#bcbcbc_20px,#dcdcdc_20px)] [&::-webkit-slider-thumb]:h-[18px] [&::-webkit-slider-thumb]:w-[18px] [&::-webkit-slider-thumb]:appearance-none [&::-webkit-slider-thumb]:rounded-full [&::-webkit-slider-thumb]:border-3 [&::-webkit-slider-thumb]:border-[#bcbcbc] [&::-webkit-slider-thumb]:bg-white"
        />
        <IconButton label="放大" className="text-[#444]"><Plus /></IconButton>
        <span className="ml-[22px] w-[50px]">55%</span>
        <Caret className="text-[#777]" />
        <IconButton label="全屏" className="ml-[26px] text-[#444]">
          <Icon w={23} h={23} sw={3}>
            <path d="M1.500 8V1.500H8M15 1.500H21.500V8M21.500 15V21.500H15M8 21.500H1.500V15" strokeLinecap="butt" />
          </Icon>
        </IconButton>
        <IconButton label="适应宽度" className="ml-3 text-[#444]">
          <Icon w={24} h={24} sw={2.6}>
            <rect x="1.500" y="1.500" width="21" height="21" strokeLinejoin="miter" />
            <path d="M6 12H18M9 9 6 12 9 15M15 9 18 12 15 15" strokeWidth="2" />
          </Icon>
        </IconButton>
      </div>
    </footer>
  );
}

export default function App() {
  return (
    <div className="flex h-screen min-h-[953px] -scale-x-100 flex-col overflow-hidden font-['Noto_Sans','Noto_Sans_CJK_SC',sans-serif]">
      <TitleBar />
      <div className="flex min-h-0 flex-1 flex-col border-x-2 border-b-2 border-[#dedede]">
        <Ribbon />
        <div className="flex min-h-0 flex-1">
          <SymbolPanel />
          <Workspace />
          <Rail />
        </div>
        <StatusBar />
      </div>
    </div>
  );
}
